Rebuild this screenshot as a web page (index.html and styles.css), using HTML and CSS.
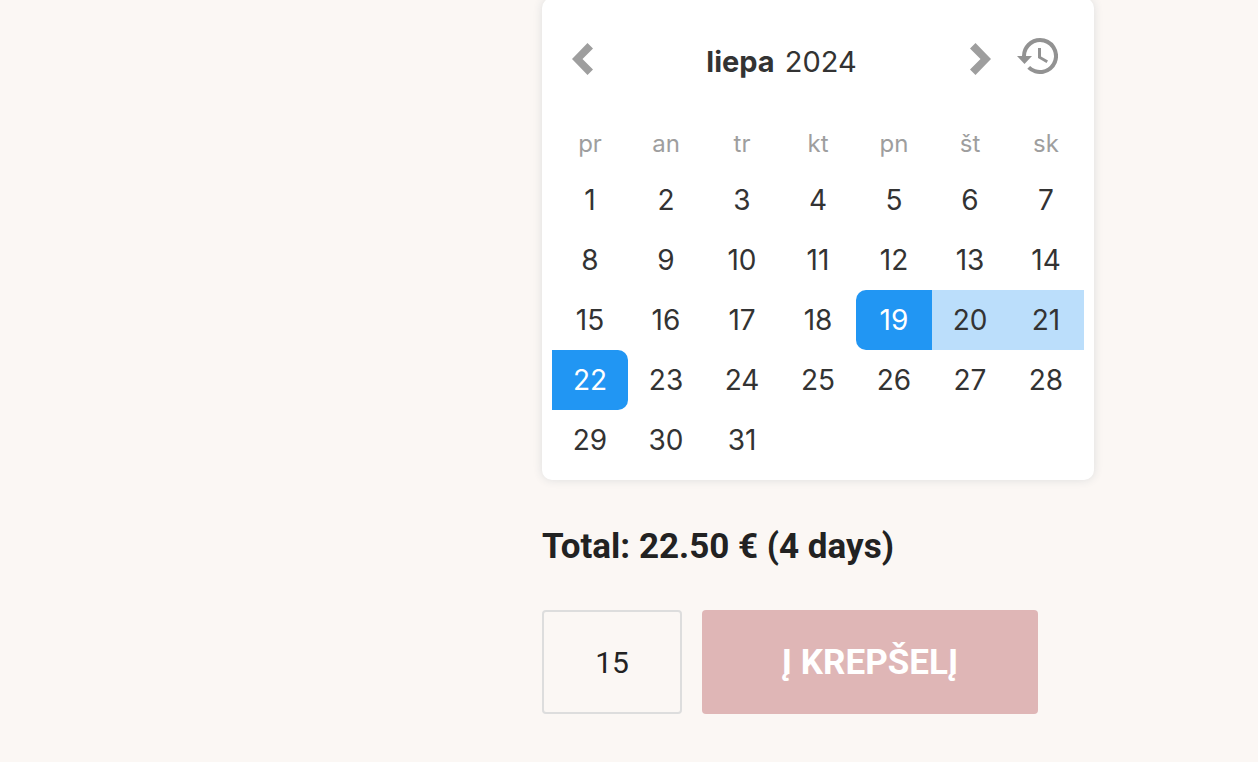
FILE: index.html
```
<!DOCTYPE html>
<html lang="lt">
<head>
<meta charset="utf-8">
<meta name="viewport" content="width=device-width, initial-scale=1">
<title>Nuoma</title>
<link rel="stylesheet" href="styles.css">
</head>
<body>
<main class="layout">
<form class="booking">
<section class="calendar" aria-label="Kalendorius">
<header class="calendar-header">
<button class="icon-button" type="button" aria-label="Ankstesnis"><svg width="21" height="32" viewBox="0 0 21 32"><path d="M15.500 0L21 5.500L10.500 16L21 26.500L15.500 32L0 16Z"/></svg></button>
<h2 class="month"><strong>liepa</strong><span>2024</span></h2>
<button class="icon-button" type="button" aria-label="Kitas"><svg width="21" height="32" viewBox="0 0 21 32"><path d="M5.500 0L0 5.500L10.500 16L0 26.500L5.500 32L21 16Z"/></svg></button>
<button class="icon-button reset" type="button" aria-label="Atstatyti"><svg width="41" height="36" viewBox="0 0 41 36"><path d="M23 0A18 18 0 0 0 5 18H0L7.500 26L15 18H9A14 14 0 1 1 13.100 27.900L10.300 30.700A18 18 0 1 0 23 0ZM21 10V20L29.500 25L31 22.600L24 18.500V10Z"/></svg></button>
</header>
<table class="days">
<thead><tr><th>pr</th><th>an</th><th>tr</th><th>kt</th><th>pn</th><th>št</th><th>sk</th></tr></thead>
<tbody>
<tr><td>1</td><td>2</td><td>3</td><td>4</td><td>5</td><td>6</td><td>7</td></tr>
<tr><td>8</td><td>9</td><td>10</td><td>11</td><td>12</td><td>13</td><td>14</td></tr>
<tr><td>15</td><td>16</td><td>17</td><td>18</td><td class="start">19</td><td class="range">20</td><td class="range">21</td></tr>
<tr><td class="end">22</td><td>23</td><td>24</td><td>25</td><td>26</td><td>27</td><td>28</td></tr>
<tr><td>29</td><td>30</td><td>31</td><td></td><td></td><td></td><td></td></tr>
</tbody>
</table>
</section>
<p class="total">Total: 22.50 € (4 days)</p>
<div class="actions">
<input class="quantity" type="text" inputmode="numeric" value="15" aria-label="Kiekis">
<button class="add" type="submit">Į KREPŠELĮ</button>
</div>
</form>
</main>
</body>
</html>
```
FILE: styles.css
```
* { box-sizing: border-box; }
body {
  margin: 0;
  background: #fbf7f4;
  color: #222;
  font-family: Roboto, sans-serif;
}
.layout {
  display: grid;
  grid-template-columns: 542fr 716fr;
}
.booking { grid-column: 2; }
.calendar {
  max-width: 552px;
  margin-top: -2px;
  padding: 10px;
  border-radius: 10px;
  background: #fff;
  box-shadow: 0 0 10px #ddd;
  color: #333;
  font-family: Inter, sans-serif;
}
.calendar-header {
  display: flex;
  align-items: center;
  padding: 30px 26px 0 20px;
}
.icon-button {
  padding: 0;
  border: 0;
  background: none;
  cursor: pointer;
}
.icon-button svg { display: block; fill: #9e9e9e; }
.reset { align-self: flex-start; margin-left: 26px; }
.icon-button.reset svg { fill: #929292; }
.month {
  display: flex;
  flex: 1;
  justify-content: center;
  gap: 10px;
  margin: 0;
  padding-top: 6px;
  font-size: 29px;
  font-weight: 400;
  line-height: 36px;
}
.month strong { font-weight: 700; }
.days {
  width: 100%;
  margin-top: 36px;
  border-collapse: collapse;
  table-layout: fixed;
}
.days th {
  height: 54px;
  padding: 0;
  color: #9e9e9e;
  font-size: 24px;
  font-weight: 400;
}
.days td {
  height: 60px;
  padding: 0;
  font-size: 28px;
  text-align: center;
}
.days .start, .days .end { background: #2196f3; color: #fff; }
.days .start { border-radius: 10px 0 0 10px; }
.days .end { border-radius: 0 10px 10px 0; }
.days .range { background: #bbdefb; }
.total {
  margin: 46px 0 42px;
  font-size: 35px;
  font-weight: 700;
  line-height: 42px;
}
.actions { display: flex; gap: 20px; }
.quantity {
  width: 140px;
  height: 104px;
  padding: 0;
  border: 2px solid #ddd;
  border-radius: 4px;
  background: transparent;
  color: #222;
  font: 400 30px Roboto, sans-serif;
  text-align: center;
}
.add {
  min-width: 336px;
  padding: 0 40px;
  border: 0;
  border-radius: 4px;
  background: #dfb6b6;
  color: #fff;
  font: 700 35px Roboto, sans-serif;
}
```
